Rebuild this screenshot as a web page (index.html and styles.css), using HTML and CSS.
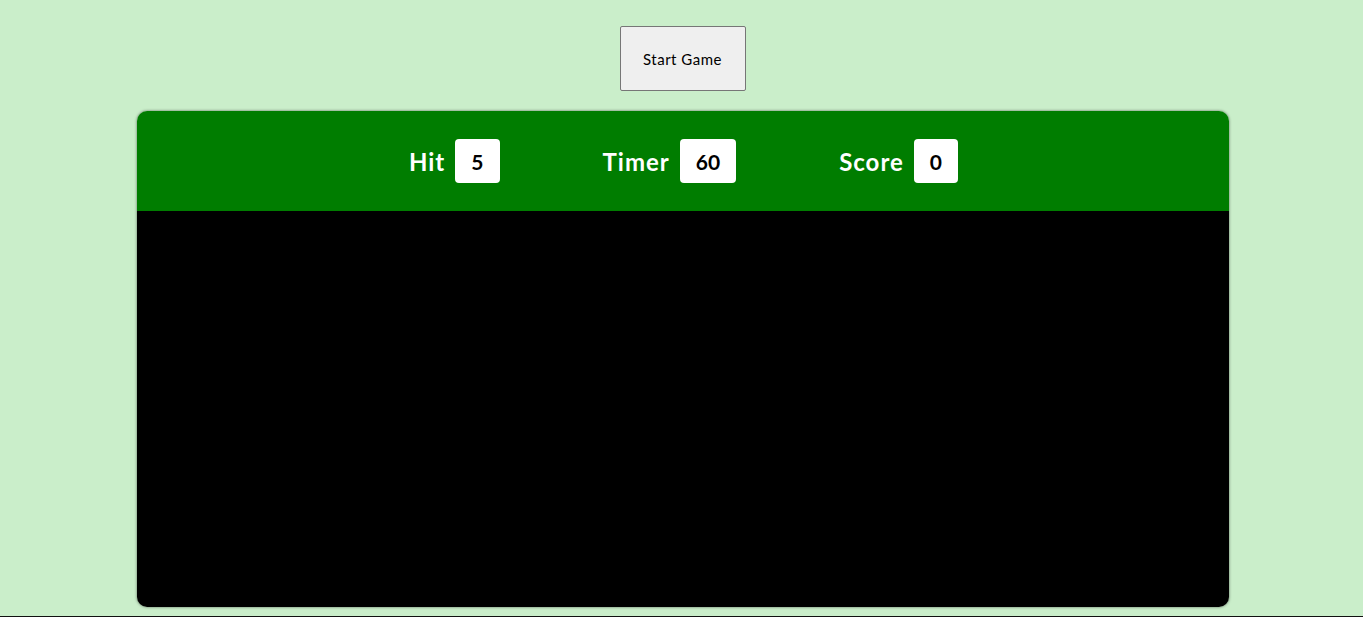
FILE: index.html
```html
<!DOCTYPE html>
<html>
<head>
<meta charset="utf-8">
<link rel="stylesheet" href="styles.css">
</head>
<body>
<main class="page">
  <button class="start-btn">Start Game</button>
  <section class="game">
    <header class="stats">
      <div class="stat"><span class="label">Hit</span><span class="value">5</span></div>
      <div class="stat"><span class="label">Timer</span><span class="value">60</span></div>
      <div class="stat"><span class="label">Score</span><span class="value">0</span></div>
    </header>
    <div class="board"></div>
  </section>
</main>
<div class="below"></div>
</body>
</html>
```
FILE: styles.css
```css
html, body {
  margin: 0;
  padding: 0;
  background: #caeeca;
  overflow: hidden;
}
body {
  font-family: "Comic Sans MS", "Lato", "Open Sans", sans-serif;
}
.page {
  display: flex;
  flex-direction: column;
  align-items: center;
  padding-top: 26px;
  padding-left: 2px;
}
.start-btn {
  width: 126px;
  height: 65px;
  background: #efefef;
  border: 1px solid #767676;
  border-radius: 2px;
  font-family: "Comic Sans MS", "Lato", "Open Sans", sans-serif;
  font-size: 15px;
  letter-spacing: 0.5px;
  color: #000;
  padding: 0;
}
.game {
  margin-top: 20px;
  width: 1092px;
  height: 496px;
  border-radius: 10px;
  overflow: hidden;
  box-shadow: 0 0 3px rgba(0, 0, 0, 0.55);
  display: flex;
  flex-direction: column;
}
.stats {
  height: 100px;
  background: #007d00;
  display: flex;
  align-items: center;
  justify-content: center;
  gap: 103px;
  padding-left: 2px;
}
.stat {
  display: flex;
  align-items: center;
  gap: 10px;
  color: #fff;
}
.label {
  font-size: 24px;
  font-weight: 700;
  letter-spacing: 1px;
}
.value {
  background: #fff;
  color: #000;
  border-radius: 4px;
  height: 44px;
  min-width: 44px;
  padding: 0 16px;
  box-sizing: border-box;
  display: flex;
  align-items: center;
  justify-content: center;
  font-size: 21px;
  font-weight: 700;
}
.board {
  flex: 1;
  background: #000;
}
.below {
  margin-top: 9px;
  width: 100%;
  height: 10px;
  background: #111;
}
```
